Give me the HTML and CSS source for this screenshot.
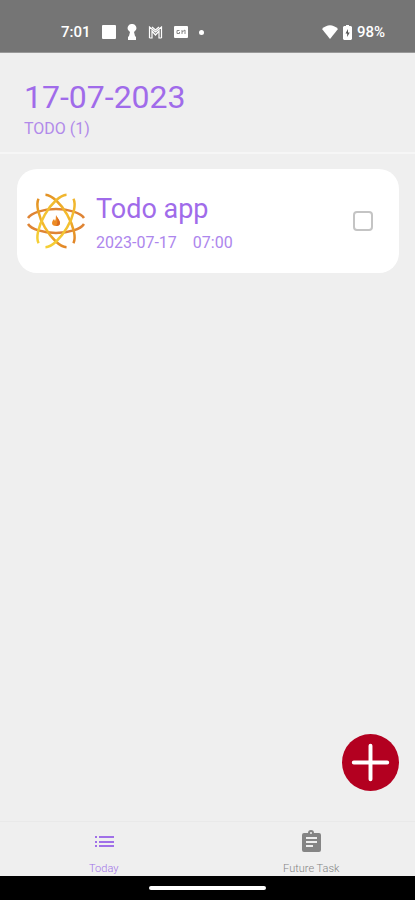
FILE: index.html
```html
<!DOCTYPE html>
<html lang="en">
<head>
<meta charset="utf-8">
<meta name="viewport" content="width=device-width, initial-scale=1">
<title>Todo</title>
<link rel="stylesheet" href="styles.css">
</head>
<body>
<div class="status">
  <div class="status-left">
    <span>7:01</span>
    <svg width="14" height="14" viewBox="0 0 14 14"><rect width="14" height="14" rx="1"/></svg>
    <svg width="10" height="16" viewBox="0 0 10 16"><path d="M5 0a4 4 0 0 1 3 7L7 8l1 4 1 1v3H1v-3l1-1 1-4-1-1a4 4 0 0 1 3-7z"/></svg>
    <svg width="15" height="13" viewBox="0 0 15 13"><path d="M1.500 12V1l6 5 6-5v11M1.500 12h2.500V5l3.500 4L11 5v7h2.500M4 1l3.500 3L11 1" fill="none" stroke="currentColor" stroke-width="1.200"/></svg>
    <svg width="14" height="12" viewBox="0 0 14 12"><rect width="14" height="12" rx="1"/><path d="M5.500 4.500H3v3h2.500V6M8 4v4M8 6l3-2v4" fill="none" stroke="#888" stroke-width="1"/></svg>
    <svg width="5" height="5" viewBox="0 0 5 5"><circle cx="2.500" cy="2.500" r="2.500"/></svg>
  </div>
  <div class="status-right">
    <svg width="16" height="14" viewBox="0 0 16 14"><path d="M0 4Q8-3.500 16 4L8 14z"/></svg>
    <svg width="9" height="15" viewBox="0 0 9 15"><path d="M3 0h3v1h2l1 1v12l-1 1H1l-1-1V2l1-1h2z"/><path d="M5 4L2.500 8.500h1.700V12l2.500-4.500H5z" fill="#555"/></svg>
    <span>98%</span>
  </div>
</div>
<header class="header">
  <h1>17-07-2023</h1>
  <p>TODO (1)</p>
</header>
<main class="content">
  <article class="card">
    <svg width="60" height="60" viewBox="-30 -30 60 60" aria-hidden="true">
      <defs>
        <linearGradient id="gold" x1="0" y1="0" x2="1" y2="0"><stop offset="0" stop-color="#f5cf35"/><stop offset="1" stop-color="#f0b52e"/></linearGradient>
        <linearGradient id="amber" x1="0" y1="0" x2="1" y2="0"><stop offset="0" stop-color="#e29024"/><stop offset=".5" stop-color="#f5bd2c"/><stop offset="1" stop-color="#e18426"/></linearGradient>
      </defs>
      <g fill="none" stroke-width="2.500">
        <path d="M-28-3A29 12 0 0 1 28-3M-28 3A29 12 0 0 0 28 3" stroke="#df8434"/>
        <path transform="rotate(60)" d="M-28-4A29 12 0 0 1 28-4M-28 4A29 12 0 0 0 28 4" stroke="url(#amber)"/>
        <path transform="rotate(-60)" d="M-28-4A29 12 0 0 1 28-4M-28 4A29 12 0 0 0 28 4" stroke="url(#gold)"/>
      </g>
      <path d="M0-6C1-3 4-1 4 2Q4 5 0 5T-4 2Q-4 0-2-2L-1 0Q0-2 0-6z" fill="#ed8b24"/>
      <path d="M0-6C1-3 4-1 4 2Q4 5 0 5Q3 1 0-6z" fill="#d96b20"/>
    </svg>
    <label class="task" for="done">
      <span class="title">Todo app</span>
      <span class="when"><time>2023-07-17</time><time>07:00</time></span>
    </label>
    <input class="check" type="checkbox" id="done">
  </article>
  <button class="add" type="button" aria-label="Add task">
    <svg width="57" height="57" viewBox="0 0 58 58"><path d="M29 12v34M12 29h34" stroke="#fff" stroke-width="4" stroke-linecap="round"/></svg>
  </button>
</main>
<nav class="tabs">
  <a class="tab active" href="#today">
    <svg width="24" height="24" viewBox="0 0 24 24"><path d="M3 6h2v2H3zM7 6h15v2H7zM3 11h2v2H3zM7 11h15v2H7zM3 15h2v2H3zM7 15h15v2H7z"/></svg>
    <span>Today</span>
  </a>
  <a class="tab" href="#future">
    <svg width="24" height="24" viewBox="0 0 24 24"><path fill-rule="evenodd" d="M20 3h-5a3 3 0 0 0-6 0H5a2 2 0 0 0-2 2v15a2 2 0 0 0 2 2h15a2 2 0 0 0 2-2V5a2 2 0 0 0-2-2zM12 2a1 1 0 1 1 0 2 1 1 0 0 1 0-2zM7 7h11v2H7zM7 11h11v2H7zM7 15h7v2H7z"/></svg>
    <span>Future Task</span>
  </a>
</nav>
<div class="gesture"><div class="pill"></div></div>
</body>
</html>
```
FILE: styles.css
```css
* { box-sizing: border-box; }
body {
  margin: 0;
  min-height: 100vh;
  display: flex;
  flex-direction: column;
  background: #efefef;
  color: #a06bea;
  font-family: Roboto, "Liberation Sans", sans-serif;
}
svg { display: block; fill: currentColor; }
.status {
  display: flex;
  justify-content: space-between;
  align-items: center;
  height: 53px;
  padding: 12px 30px 0 61px;
  background: #757575;
  border-bottom: 1px solid #999;
  color: #fff;
  font-size: 15px;
  font-weight: 500;
}
.status-left, .status-right { display: flex; align-items: center; }
.status-left { gap: 11px; }
.status-right { gap: 5px; }
.header {
  height: 101px;
  padding: 24px 24px 0;
  border-bottom: 2px solid #f6f6f6;
}
h1 { margin: 0; font-size: 32px; font-weight: 400; line-height: 40px; }
p { margin: 0; font-size: 16px; line-height: 24px; color: #b18aea; }
.content {
  flex: 1;
  display: flex;
  flex-direction: column;
  justify-content: space-between;
  padding: 15px 16px 30px 17px;
}
.card {
  display: flex;
  align-items: center;
  height: 104px;
  padding: 0 26px 0 9px;
  border-radius: 20px;
  background: #fff;
}
.task { flex: 1; margin-left: 10px; padding-top: 3px; }
.title { display: block; font-size: 27px; line-height: 36px; }
.when { display: flex; gap: 16px; margin-top: 4px; font-size: 16px; line-height: 24px; color: #ad86ed; }
.check {
  appearance: none;
  width: 20px;
  height: 20px;
  margin: 0;
  border: 2px solid #c4c4c4;
  border-radius: 4px;
}
.check:checked { background: #a06bea; }
.add {
  align-self: flex-end;
  width: 57px;
  height: 57px;
  padding: 0;
  border: 0;
  border-radius: 50%;
  background: #b30020;
}
.tabs {
  display: flex;
  height: 55px;
  border-top: 1px solid #e9e9e9;
}
.tab {
  flex: 1;
  display: flex;
  flex-direction: column;
  align-items: center;
  gap: 8px;
  padding-top: 8px;
  color: #858585;
  font-size: 11px;
  font-weight: 300;
  line-height: 14px;
  text-decoration: none;
}
.active { color: #a070e8; }
.gesture {
  display: flex;
  align-items: center;
  justify-content: center;
  height: 24px;
  background: #000;
}
.pill { width: 28%; height: 4px; border-radius: 2px; background: #fff; }
```
